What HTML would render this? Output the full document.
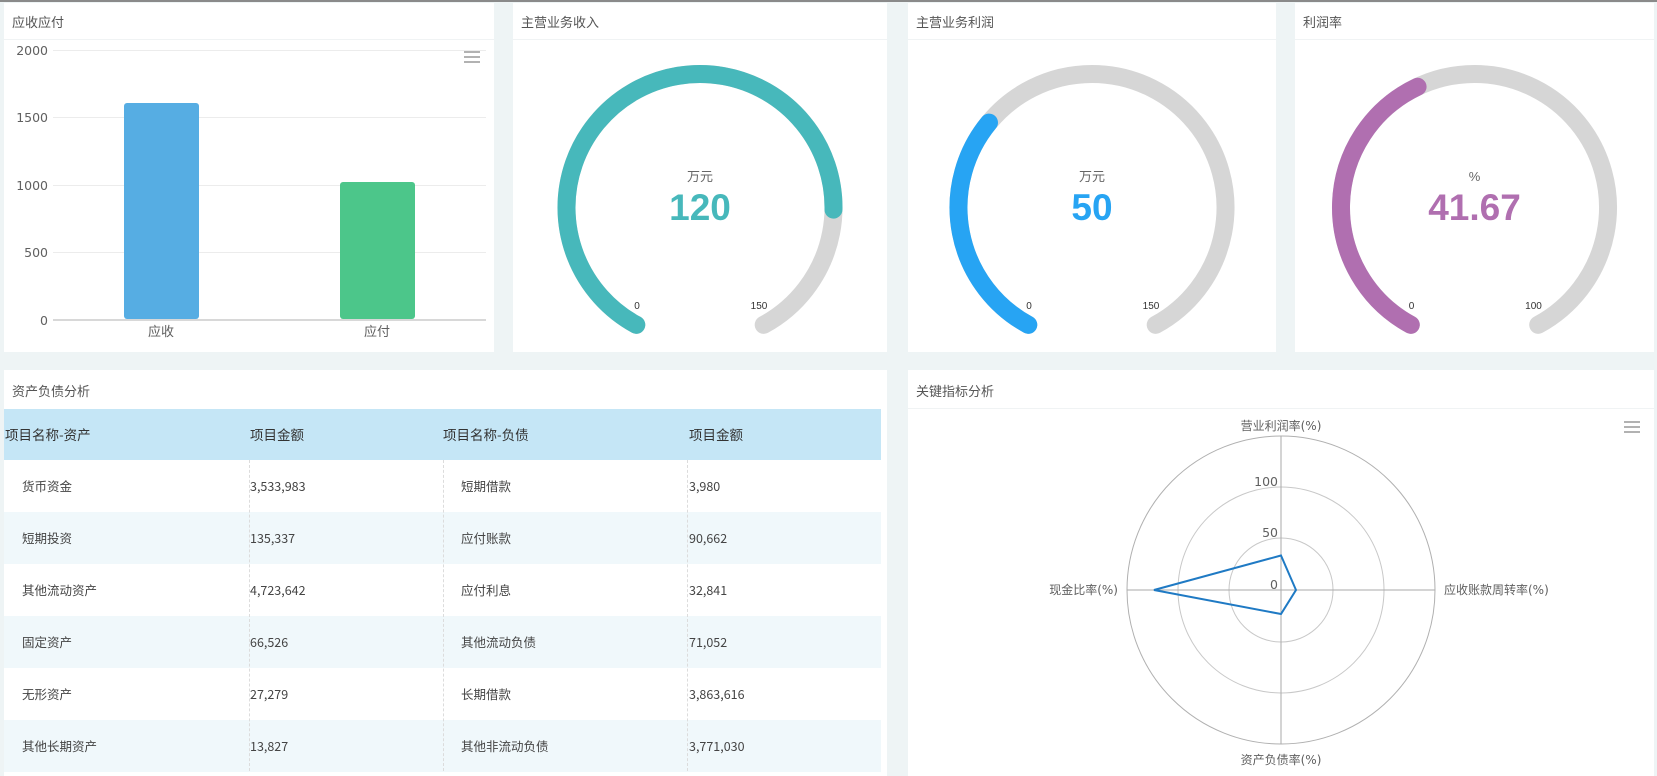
<!DOCTYPE html>
<html><head><meta charset="utf-8"><style>
*{margin:0;padding:0;box-sizing:border-box}
body{width:1657px;height:776px;background:#eef4f5;position:relative;overflow:hidden;font-family:"Liberation Sans","Noto Sans CJK SC",sans-serif;color:#555}
.topline{position:absolute;left:0;top:0;width:1657px;height:2px;background:#8a8a8a}
.p{position:absolute;background:#fff}
.t{position:absolute;left:8px;top:9px;font-size:13px;color:#555}
.hd{position:absolute;left:0;right:0;top:36px;height:1px;background:#f0f3f4}
svg{position:absolute;left:0;top:0}
.tb{position:absolute;left:4px;top:409px;width:877px}
.row{position:relative;height:52px;font-size:12.5px;color:#444}
.row span{position:absolute;top:0;line-height:52px;font-family:"Noto Sans CJK SC",sans-serif}
.alt{background:#f0f8fb}
.head{height:51px;background:#c5e6f6;font-size:13.5px;color:#333}
.head span{line-height:51px}
.dash{position:absolute;top:460px;height:311px;border-left:1px dashed #dcdcdc}
</style></head><body>
<div class="topline"></div>

<div class="p" style="left:4px;top:3px;width:490px;height:349px"><div class="t">应收应付</div><div class="hd"></div></div>
<div class="p" style="left:513px;top:3px;width:374px;height:349px"><div class="t">主营业务收入</div><div class="hd"></div></div>
<div class="p" style="left:908px;top:3px;width:368px;height:349px"><div class="t">主营业务利润</div><div class="hd"></div></div>
<div class="p" style="left:1295px;top:3px;width:359px;height:349px"><div class="t">利润率</div><div class="hd"></div></div>
<div class="p" style="left:4px;top:370px;width:883px;height:406px"><div class="t" style="top:11px">资产负债分析</div></div>
<div class="p" style="left:908px;top:370px;width:746px;height:406px"><div class="t" style="top:11px">关键指标分析</div><div class="hd" style="top:38px"></div></div>

<svg width="1657" height="776" id="s" font-family="DejaVu Sans, Noto Sans CJK SC, sans-serif">
<g stroke="#ececec" stroke-width="1">
<line x1="53" y1="50.5" x2="486" y2="50.5"/><line x1="53" y1="117.5" x2="486" y2="117.5"/>
<line x1="53" y1="185.5" x2="486" y2="185.5"/><line x1="53" y1="252.5" x2="486" y2="252.5"/>
</g>
<line x1="53" y1="320" x2="486" y2="320" stroke="#d8d8d8" stroke-width="2"/>
<g font-size="12.5" fill="#606060" text-anchor="end">
<text x="48" y="55">2000</text><text x="48" y="122">1500</text><text x="48" y="190">1000</text><text x="48" y="257">500</text><text x="48" y="325">0</text>
</g>
<rect x="124" y="103" width="75" height="216" rx="3" fill="#56ade3"/>
<rect x="340" y="182" width="75" height="137" rx="3" fill="#4cc68a"/>
<g font-size="13" fill="#606060" text-anchor="middle"><text x="161" y="336">应收</text><text x="377" y="336">应付</text></g>
<g stroke="#999" stroke-width="1.5"><line x1="464" y1="52" x2="480" y2="52"/><line x1="464" y1="57" x2="480" y2="57"/><line x1="464" y1="62" x2="480" y2="62"/></g>

<g id="gauges"></g>

<g fill="none" stroke="#c8c8c8" stroke-width="1">
<circle cx="1281" cy="590" r="52"/><circle cx="1281" cy="590" r="103"/>
</g>
<circle cx="1281" cy="590" r="154" fill="none" stroke="#b0b0b0"/>
<g stroke="#aaa"><line x1="1281" y1="436" x2="1281" y2="744"/><line x1="1127" y1="590" x2="1435" y2="590"/></g>
<polygon points="1281,555.5 1296,590 1281,614 1154,590" fill="none" stroke="#1f7ac4" stroke-width="2"/>
<g font-size="12" fill="#606060">
<text x="1281" y="430" text-anchor="middle">营业利润率(%)</text>
<text x="1281" y="764" text-anchor="middle">资产负债率(%)</text>
<text x="1118" y="594" text-anchor="end">现金比率(%)</text>
<text x="1444" y="594">应收账款周转率(%)</text>
<text x="1278" y="486" text-anchor="end" font-size="12.5">100</text>
<text x="1278" y="537" text-anchor="end" font-size="12.5">50</text>
<text x="1278" y="589" text-anchor="end" font-size="12.5">0</text>
</g>
<g stroke="#999" stroke-width="1.5"><line x1="1624" y1="422" x2="1640" y2="422"/><line x1="1624" y1="427" x2="1640" y2="427"/><line x1="1624" y1="432" x2="1640" y2="432"/></g>
</svg>

<div class="tb">
<div class="row head"><span style="left:1px">项目名称-资产</span><span style="left:246px">项目金额</span><span style="left:439px">项目名称-负债</span><span style="left:685px">项目金额</span></div>
<div class="row"><span style="left:18px">货币资金</span><span style="left:246px">3,533,983</span><span style="left:457px">短期借款</span><span style="left:685px">3,980</span></div>
<div class="row alt"><span style="left:18px">短期投资</span><span style="left:246px">135,337</span><span style="left:457px">应付账款</span><span style="left:685px">90,662</span></div>
<div class="row"><span style="left:18px">其他流动资产</span><span style="left:246px">4,723,642</span><span style="left:457px">应付利息</span><span style="left:685px">32,841</span></div>
<div class="row alt"><span style="left:18px">固定资产</span><span style="left:246px">66,526</span><span style="left:457px">其他流动负债</span><span style="left:685px">71,052</span></div>
<div class="row"><span style="left:18px">无形资产</span><span style="left:246px">27,279</span><span style="left:457px">长期借款</span><span style="left:685px">3,863,616</span></div>
<div class="row alt"><span style="left:18px">其他长期资产</span><span style="left:246px">13,827</span><span style="left:457px">其他非流动负债</span><span style="left:685px">3,771,030</span></div>
</div>
<div class="dash" style="left:249px"></div>
<div class="dash" style="left:443px"></div>
<div class="dash" style="left:687px"></div>

<script>
var NS="http://www.w3.org/2000/svg",g=document.getElementById("gauges");
function pt(cx,cy,r,a){a=a*Math.PI/180;return [cx+r*Math.cos(a),cy+r*Math.sin(a)];}
function arc(cx,cy,r,a0,a1,col){var p0=pt(cx,cy,r,a0),p1=pt(cx,cy,r,a1),large=(a1-a0)>180?1:0;
var e=document.createElementNS(NS,"path");e.setAttribute("d","M"+p0[0]+" "+p0[1]+" A"+r+" "+r+" 0 "+large+" 1 "+p1[0]+" "+p1[1]);
e.setAttribute("fill","none");e.setAttribute("stroke",col);e.setAttribute("stroke-width","18");e.setAttribute("stroke-linecap","round");g.appendChild(e);}
function txt(x,y,s,size,col,w,ff){var e=document.createElementNS(NS,"text");e.setAttribute("x",x);e.setAttribute("y",y);e.setAttribute("text-anchor","middle");e.setAttribute("font-size",size);e.setAttribute("fill",col);if(w)e.setAttribute("font-weight","bold");if(ff)e.setAttribute("font-family",ff);e.textContent=s;g.appendChild(e);}
var A0=118.5,S=303;
[[700,"万元","120",0.8,"#47b8bb","150"],[1092,"万元","50",1/3,"#27a4f3","150"],[1474.5,"%","41.67",0.4167,"#b06fb0","100"]].forEach(function(d){
var cx=d[0],cy=207.5,r=133.5;
arc(cx,cy,r,A0,A0+S,"#d6d6d6");arc(cx,cy,r,A0,A0+S*d[3],d[4]);
txt(cx,181,d[1],13,"#666",0,"Liberation Sans, Noto Sans CJK SC, sans-serif");txt(cx,220,d[2],37,d[4],1,"Liberation Sans, sans-serif");
txt(cx-63,309,"0",10,"#333",0,"Liberation Sans, sans-serif");txt(cx+59,309,d[5],10,"#333",0,"Liberation Sans, sans-serif");});
</script>
</body></html>
